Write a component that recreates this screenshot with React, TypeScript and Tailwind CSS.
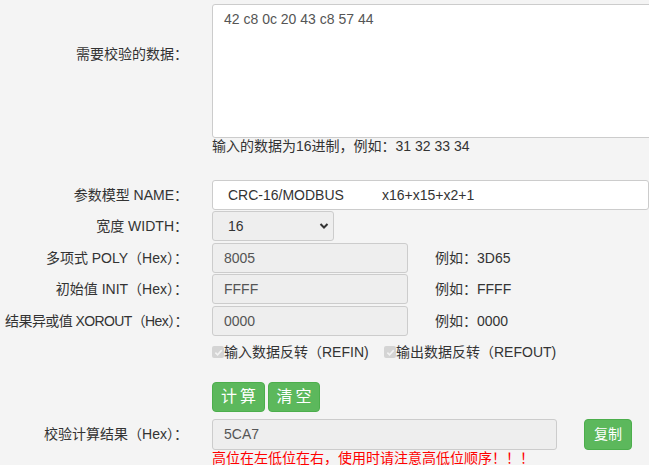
const font = { fontFamily: '"Liberation Sans", "Noto Sans CJK SC", Arial, sans-serif' };

function Label({ children, className = "" }: { children?: React.ReactNode; className?: string }) {
  return (
    <div className={`flex w-[212px] shrink-0 justify-end whitespace-nowrap pr-[24px] text-[14px] text-[#333] ${className}`}>
      {children}
    </div>
  );
}

function Check({ label }: { label: string }) {
  return (
    <div className="flex items-center">
      <span className="flex h-[12px] w-[12px] items-center justify-center rounded-[2px] bg-[#d4d4d4]">
        <svg width="9" height="9" viewBox="0 0 10 10">
          <path d="M1.5 5.2 L4 7.6 L8.6 2.4" stroke="#f2f2f2" strokeWidth="1.8" fill="none" />
        </svg>
      </span>
      <span className="text-[14px] text-[#333]">{label}</span>
    </div>
  );
}

function HexRow({ label, value, example, tight }: { label: string; value: string; example: string; tight?: boolean }) {
  return (
    <div className="flex h-[30px] items-center">
      <Label className={tight ? "tracking-[-0.6px]" : ""}>{label}</Label>
      <div className="flex h-[30px] w-[196px] items-center rounded-[3px] border border-[#ccc] bg-[#eee] pl-[11px] text-[14px] text-[#555]">
        {value}
      </div>
      <div className="ml-[27px] text-[14px] text-[#333]">例如：{example}</div>
    </div>
  );
}

export default function App() {
  return (
    <div className="h-[465px] w-[649px] overflow-hidden bg-[#f4f4f4]" style={font}>
      <div className="pt-[4px]">
        <div className="flex items-start">
          <Label className="pt-[40px] leading-[20px]">需要校验的数据：</Label>
          <div className="flex flex-col">
            <div className="h-[134px] w-[480px] rounded-[3px] border border-[#ccc] bg-white px-[11px] pt-[4px] text-[14px] text-[#555]">
              42 c8 0c 20 43 c8 57 44
            </div>
            <div className="text-[14px] leading-[16px] text-[#333]">输入的数据为16进制，例如：31 32 33 34</div>
          </div>
        </div>

        <div className="mt-[26px] flex h-[30px] items-center">
          <Label>参数模型 NAME：</Label>
          <div className="flex h-[30px] w-[480px] items-center rounded-[3px] border border-[#ccc] bg-white pl-[15px] text-[14px] text-[#333]">
            <span className="w-[154px]">CRC-16/MODBUS</span>
            <span>x16+x15+x2+1</span>
          </div>
        </div>

        <div className="mt-[1px] flex h-[30px] items-center">
          <Label>宽度 WIDTH：</Label>
          <div className="flex h-[30px] w-[122px] items-center justify-between rounded-[3px] border border-[#ccc] bg-[#eee] pl-[15px] pr-[4px] text-[14px] text-[#333]">
            <span>16</span>
            <svg width="10" height="8" viewBox="0 0 10 8">
              <path d="M1.5 2 L5 5.5 L8.5 2" stroke="#333" strokeWidth="2" fill="none" />
            </svg>
          </div>
        </div>

        <div className="mt-[2px]">
          <HexRow label="多项式 POLY（Hex）：" value="8005" example="3D65" />
        </div>
        <div className="mt-[1px]">
          <HexRow label="初始值 INIT（Hex）：" value="FFFF" example="FFFF" />
        </div>
        <div className="mt-[2px]">
          <HexRow label="结果异或值 XOROUT（Hex）：" value="0000" example="0000" tight />
        </div>

        <div className="mt-[5px] flex h-[22px] items-center">
          <Label />
          <div className="w-[172px]">
            <Check label="输入数据反转（REFIN)" />
          </div>
          <Check label="输出数据反转（REFOUT)" />
        </div>

        <div className="mt-[19px] flex items-center">
          <Label />
          <div className="flex gap-[3px]">
            <button className="h-[30px] w-[53px] rounded-[4px] border border-[#4cae4c] bg-[#5cb85c] pl-[3px] text-[16px] tracking-[3px] text-white">
              计算
            </button>
            <button className="h-[30px] w-[52px] rounded-[4px] border border-[#4cae4c] bg-[#5cb85c] pl-[3px] text-[16px] tracking-[3px] text-white">
              清空
            </button>
          </div>
        </div>

        <div className="mt-[7px] flex h-[31px] items-center">
          <Label>校验计算结果（Hex）：</Label>
          <div className="flex h-[31px] w-[345px] items-center rounded-[3px] border border-[#ccc] bg-[#eee] pl-[11px] text-[14px] text-[#555]">
            5CA7
          </div>
          <button className="ml-[27px] h-[31px] w-[48px] rounded-[4px] border border-[#4cae4c] bg-[#5cb85c] text-[14px] text-white">
            复制
          </button>
        </div>

        <div className="flex">
          <Label />
          <div className="text-[14px] leading-[16px] text-[#ff0000]">高位在左低位在右，使用时请注意高低位顺序！！！</div>
        </div>
      </div>
    </div>
  );
}
